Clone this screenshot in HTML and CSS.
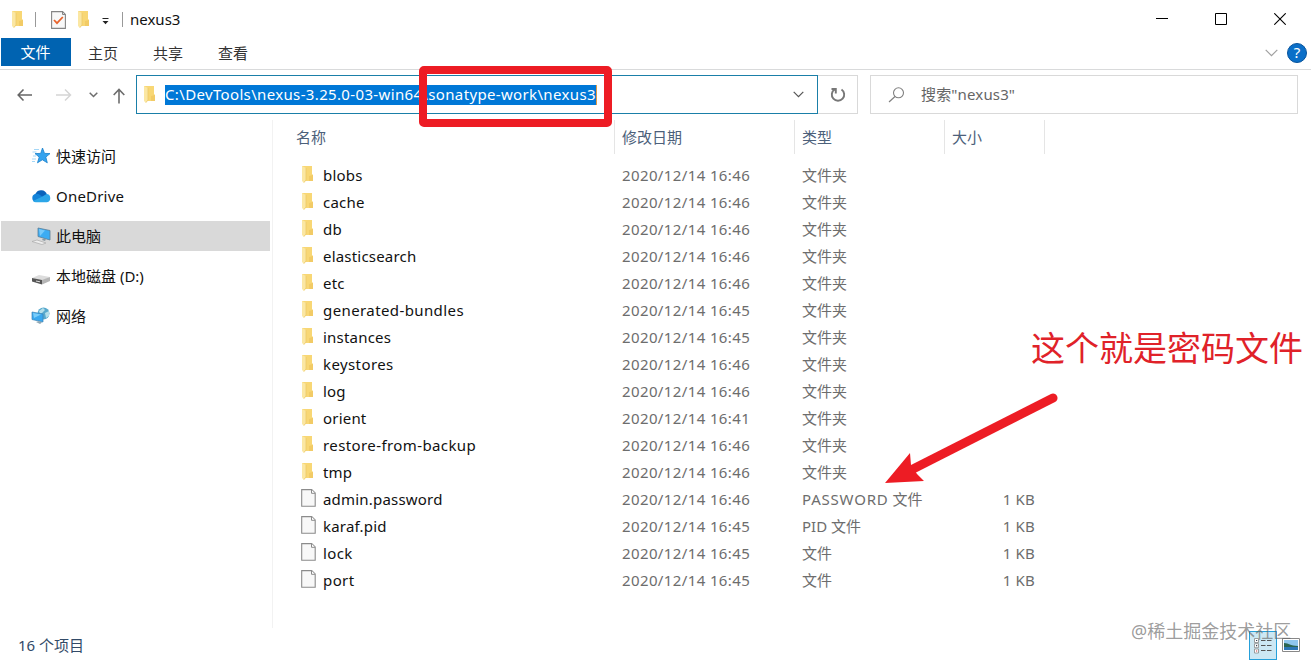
FILE: index.html
```html
<!DOCTYPE html>
<html lang="zh-CN">
<head>
    <meta charset="UTF-8">
    <meta name="viewport" content="width=device-width, initial-scale=1.0">
    <title>nexus3</title>
    <link rel="stylesheet" href="styles.css">
</head>
<body>
    <!-- shared icons -->
    <svg class="defs" width="0" height="0">
        <symbol id="folder" viewBox="0 0 13 17">
            <path d="M1 0h10v8l1 1v6H1z" fill="#f8d775"/>
            <path d="M8 10l4-1v6H8z" fill="#f2cb66"/>
            <path d="M1 0l4 2v12l-2 3-2-2z" fill="#fbe7a3"/>
            <path d="M5 2v12l-2 2.5" fill="none" stroke="#e9c566" stroke-width=".7"/>
        </symbol>
        <symbol id="file" viewBox="0 0 15 18">
            <path d="M.7.6h10l3.5 3.5v13.2H.7z" fill="#f8f8f8" stroke="#8b8b8b" stroke-width="1.1"/>
            <path d="M10.5.8v3.5H14" fill="#fff" stroke="#8b8b8b"/>
        </symbol>
    </svg>

    <div class="window">
        <div class="titlebar">
            <svg class="folder"><use href="#folder"/></svg>
            <span class="sep"></span>
            <svg class="check" width="15" height="18" viewBox="0 0 15 18">
                <path d="M.6.6h11l2.8 2.8v14H.6z" fill="#f8f8f8" stroke="#858585" stroke-width="1.1"/>
                <path d="M11.5.8v2.7h2.7" fill="none" stroke="#858585"/>
                <path d="M3 9l3 3.2L11.8 6" fill="none" stroke="#e8632c" stroke-width="1.8"/>
            </svg>
            <svg class="folder"><use href="#folder"/></svg>
            <svg class="more" width="8" height="7" viewBox="0 0 8 7"><path d="M.5.5h6" stroke="#222"/><path d="M.5 3h6l-3 3.200z" fill="#222"/></svg>
            <span class="sep dark"></span>
            <span class="name">nexus3</span>
            <div class="window-buttons">
                <svg width="12" height="12"><path d="M0 5.5h12" stroke="#000"/></svg>
                <svg width="12" height="12"><path d="M.5.5h11v11H.5z" fill="none" stroke="#000"/></svg>
                <svg width="12" height="12"><path d="M.3.3l11.4 11.4M11.7.3L.3 11.7" stroke="#000" stroke-width="1.1"/></svg>
            </div>
        </div>

        <div class="ribbon">
            <span class="tab active">文件</span>
            <span class="tab">主页</span>
            <span class="tab">共享</span>
            <span class="tab">查看</span>
            <div class="ribbon-right">
                <svg width="13" height="8" viewBox="0 0 13 8"><path d="M.7.8l5.8 5.8L12.300.8" fill="none" stroke="#a0a0a0" stroke-width="1.2"/></svg>
                <span class="help">?</span>
            </div>
        </div>

        <div class="navbar">
            <div class="arrows">
                <svg width="16" height="14" viewBox="0 0 16 14"><path d="M15 7H1.500M6.500 1.500L1.200 7l5.300 5.500" fill="none" stroke="#666" stroke-width="1.6"/></svg>
                <svg width="16" height="14" viewBox="0 0 16 14"><path d="M0 7h14M9 1.500L14.500 7 9 12.500" fill="none" stroke="#d5d5d5" stroke-width="1.5"/></svg>
                <svg width="9" height="6" viewBox="0 0 9 6"><path d="M.7.7l3.800 3.800L8.300.7" fill="none" stroke="#6d6d6d" stroke-width="1.5"/></svg>
                <svg width="12" height="16" viewBox="0 0 12 16"><path d="M6 15.500V1.500M.7 7L6 1.500 11.300 7" fill="none" stroke="#6d6d6d" stroke-width="1.6"/></svg>
            </div>
            <div class="address">
                <svg class="folder"><use href="#folder"/></svg>
                <span class="path">C:\DevTools\nexus-3.25.0-03-win64\sonatype-work\nexus3</span>
                <svg class="drop" width="11" height="7" viewBox="0 0 11 7"><path d="M.7.8l4.800 4.800L10.300.8" fill="none" stroke="#555" stroke-width="1.2"/></svg>
            </div>
            <div class="refresh">
                <svg width="16" height="16" viewBox="0 0 16 16"><path d="M11.500 2.500A6.200 6.200 0 1 1 4.500 2.500M1.500 2h4.300v4.500" fill="none" stroke="#777" stroke-width="1.9"/></svg>
            </div>
            <div class="search">
                <svg width="17" height="16" viewBox="0 0 17 16"><circle cx="10.500" cy="5.800" r="5" fill="none" stroke="#808080" stroke-width="1.1"/><path d="M7 9.500L1 15" stroke="#808080" stroke-width="1.200"/></svg>
                <span>搜索"nexus3"</span>
            </div>
            <div class="highlight"></div>
        </div>

        <div class="main">
            <div class="sidebar">
                <div class="place">
                    <svg width="20" height="18" viewBox="0 0 20 18">
                        <path d="M11.500 1l2 5.400 5.500.2-4.200 3.500 1.500 5.700-4.900-3-4.900 3 1.700-5.700L4 6.600l5.700-.2z" fill="#36a3ee" stroke="#1680cb" stroke-width=".8"/>
                        <path d="M3 2.500h5M1.500 5h4M2 9h3M1 12h4M1 14.500h3" stroke="#8dcdf5" stroke-width=".8"/>
                    </svg>
                    <span>快速访问</span>
                </div>
                <div class="place">
                    <svg width="20" height="18" viewBox="0 0 20 18">
                        <path d="M5 15a5 5 0 0 1-.5-8.300A6.300 6.300 0 0 1 16 7.500L12 13z" fill="#0a63bb"/>
                        <path d="M4 7a5 5 0 0 1 5 1l6 4-6 3H4.500A4.200 4.200 0 0 1 4 7z" fill="#1383d9"/>
                        <path d="M2 14l9-4.300 4.500-2.600A4.100 4.100 0 0 1 16 15.200H5A4 4 0 0 1 2 14z" fill="#2ca6e8"/>
                    </svg>
                    <span class="latin">OneDrive</span>
                </div>
                <div class="place selected">
                    <svg width="20" height="18" viewBox="0 0 20 18">
                        <path d="M7 1l12 2.500v9.500L7 9.500z" fill="#3cacf3" stroke="#5b7f98" stroke-width=".8"/>
                        <path d="M8 2l6 1.500L9 9z" fill="#77cafb"/>
                        <path d="M12 11.500l3 .8-1 1.700-3-1z" fill="#8d9aa2"/>
                        <path d="M1 14.500l5-1.500 9 3-4 1.500z" fill="#eee" stroke="#aaa" stroke-width=".7"/>
                    </svg>
                    <span>此电脑</span>
                </div>
                <div class="place">
                    <svg width="20" height="18" viewBox="0 0 20 18">
                        <path d="M1 11l7-3 11 2-8 4z" fill="#ddd"/>
                        <path d="M1 11l10 2v4.500L1 14.500z" fill="#555"/>
                        <path d="M11 13l8-3v4l-8 3.500z" fill="#b5b5b5"/>
                        <path d="M5 14l4 .8" stroke="#ddd"/>
                    </svg>
                    <span>本地磁盘 (D:)</span>
                </div>
                <div class="place">
                    <svg width="20" height="18" viewBox="0 0 20 18">
                        <circle cx="12.500" cy="6.500" r="6" fill="#58a9cd"/>
                        <path d="M8 4l4-3 2 2-3 3-2 1zM14 6l4-2v5l-3 2z" fill="#b5dfea"/>
                        <path d="M1 5l11 2v8L1 12.500z" fill="#39a8ef" stroke="#3a83b5" stroke-width=".7"/>
                        <path d="M2 6l8 1.500L3 11z" fill="#79cdfa"/>
                        <path d="M5 15l3-1 3 1.500-2 1.500z" fill="#91a8b4"/>
                    </svg>
                    <span>网络</span>
                </div>
            </div>

            <div class="files">
                <div class="row head"><span>名称</span><span>修改日期</span><span>类型</span><span>大小</span></div>
                <div class="list">
                    <div class="row"><span class="fname"><svg class="folder"><use href="#folder"/></svg>blobs</span><span class="date">2020/12/14 16:46</span><span>文件夹</span><span></span></div>
                    <div class="row"><span class="fname"><svg class="folder"><use href="#folder"/></svg>cache</span><span class="date">2020/12/14 16:46</span><span>文件夹</span><span></span></div>
                    <div class="row"><span class="fname"><svg class="folder"><use href="#folder"/></svg>db</span><span class="date">2020/12/14 16:46</span><span>文件夹</span><span></span></div>
                    <div class="row"><span class="fname"><svg class="folder"><use href="#folder"/></svg>elasticsearch</span><span class="date">2020/12/14 16:46</span><span>文件夹</span><span></span></div>
                    <div class="row"><span class="fname"><svg class="folder"><use href="#folder"/></svg>etc</span><span class="date">2020/12/14 16:46</span><span>文件夹</span><span></span></div>
                    <div class="row"><span class="fname wide"><svg class="folder"><use href="#folder"/></svg>generated-bundles</span><span class="date">2020/12/14 16:45</span><span>文件夹</span><span></span></div>
                    <div class="row"><span class="fname"><svg class="folder"><use href="#folder"/></svg>instances</span><span class="date">2020/12/14 16:45</span><span>文件夹</span><span></span></div>
                    <div class="row"><span class="fname wide"><svg class="folder"><use href="#folder"/></svg>keystores</span><span class="date">2020/12/14 16:46</span><span>文件夹</span><span></span></div>
                    <div class="row"><span class="fname"><svg class="folder"><use href="#folder"/></svg>log</span><span class="date">2020/12/14 16:46</span><span>文件夹</span><span></span></div>
                    <div class="row"><span class="fname"><svg class="folder"><use href="#folder"/></svg>orient</span><span class="date">2020/12/14 16:41</span><span>文件夹</span><span></span></div>
                    <div class="row"><span class="fname wide"><svg class="folder"><use href="#folder"/></svg>restore-from-backup</span><span class="date">2020/12/14 16:46</span><span>文件夹</span><span></span></div>
                    <div class="row"><span class="fname"><svg class="folder"><use href="#folder"/></svg>tmp</span><span class="date">2020/12/14 16:46</span><span>文件夹</span><span></span></div>
                    <div class="row"><span class="fname"><svg class="file"><use href="#file"/></svg>admin.password</span><span class="date">2020/12/14 16:46</span><span><span class="caps">PASSWORD</span> 文件</span><span class="size">1 KB</span></div>
                    <div class="row"><span class="fname"><svg class="file"><use href="#file"/></svg>karaf.pid</span><span class="date">2020/12/14 16:45</span><span>PID 文件</span><span class="size">1 KB</span></div>
                    <div class="row"><span class="fname wide"><svg class="file"><use href="#file"/></svg>lock</span><span class="date">2020/12/14 16:45</span><span>文件</span><span class="size">1 KB</span></div>
                    <div class="row"><span class="fname wide"><svg class="file"><use href="#file"/></svg>port</span><span class="date">2020/12/14 16:45</span><span>文件</span><span class="size">1 KB</span></div>
                </div>
            </div>
        </div>

        <div class="statusbar">
            <span class="count">16 个项目</span>
            <div class="views">
                <div class="details">
                    <svg width="18" height="16" viewBox="0 0 18 16">
                        <path d="M.5.5h4v4h-4zM.5 5.700h4v4h-4zM.5 11h4v4h-4z" fill="#fff" stroke="#888" stroke-width=".8"/>
                        <path d="M2 2.500h1.200M2 7.700h1.200" stroke="#345" stroke-width="1.2"/>
                        <path d="M2 13h1.200" stroke="#c33" stroke-width="1.2"/>
                        <path d="M7 2.500h4.500M13 2.500h4.500M7 7.500h4.500M13 7.500h4.500M7 12.500h4.500M13 12.500h4.500" stroke="#555"/>
                    </svg>
                </div>
                <svg class="thumb" width="18" height="14" viewBox="0 0 18 14">
                    <path d="M.5.5h17v13H.5z" fill="#fff" stroke="#888"/>
                    <path d="M2 2h14v10H2z" fill="#8fc6ee"/>
                    <path d="M2 5c5 0 6 3 14 3v1H2z" fill="#2b6552"/>
                    <path d="M2 9h14v3H2z" fill="#2c76b6"/>
                </svg>
            </div>
        </div>

        <div class="note">这个就是密码文件</div>
        <svg class="arrow" width="180" height="96" viewBox="0 0 180 96">
            <path d="M172 7L32 78" stroke="#ed1c24" stroke-width="9" stroke-linecap="round"/>
            <path d="M4 92L29 62l1 12 6 9 7 7z" fill="#ed1c24"/>
        </svg>
        <div class="watermark">@稀土掘金技术社区</div>
    </div>
</body>
</html>
```

FILE: styles.css
```css
* {
    box-sizing: border-box;
}

body {
    margin: 0;
    background: #fff;
    font-family: "Noto Sans", "Noto Sans CJK SC", sans-serif;
    font-size: 15px;
    line-height: 20px;
    color: #111;
}

svg {
    display: block;
    flex-shrink: 0;
}

.defs {
    position: absolute;
}

.window {
    position: relative;
    display: flex;
    flex-direction: column;
    width: 1311px;
    height: 661px;
    overflow: hidden;
}

.folder {
    width: 13px;
    height: 17px;
}

.file {
    width: 15px;
    height: 18px;
}

/* title bar */
.titlebar {
    display: flex;
    align-items: center;
    height: 38px;
    padding: 1px 25px 0 11px;
}

.name {
    padding-bottom: 2px;
}

.sep {
    width: 1px;
    height: 15px;
    margin: 0 15px 0 11px;
    background: #999;
}

.check {
    margin-right: 11px;
}

.more {
    margin: 3px 0 0 12px;
}

.sep.dark {
    margin: 0 7px 0 12px;
}

.window-buttons {
    display: flex;
    gap: 47px;
    margin-left: auto;
    padding-bottom: 2px;
}

/* ribbon */
.ribbon {
    display: flex;
    height: 32px;
    padding-left: 1px;
    border-bottom: 1px solid #d9dadb;
}

.tab {
    width: 65px;
    padding: 5px 1px 0 0;
    text-align: center;
    color: #333;
}

.tab.active {
    width: 70px;
    height: 28px;
    padding-top: 4px;
    background: #0063b1;
    color: #fff;
}

.ribbon-right {
    display: flex;
    align-items: center;
    gap: 9px;
    margin: -1px 4px 0 auto;
}

.help {
    width: 20px;
    height: 20px;
    border: 1px solid #07539c;
    border-radius: 50%;
    background: #0b6fc8;
    color: #fff;
    line-height: 17px;
    text-align: center;
}

/* navigation */
.navbar {
    position: relative;
    display: flex;
    height: 50px;
    padding: 5px 13px 6px 17px;
}

.arrows {
    display: flex;
    align-items: center;
    width: 119px;
}

.arrows svg:nth-child(2) {
    margin-left: 23px;
}

.arrows svg:nth-child(3) {
    margin-left: 17px;
}

.arrows svg:nth-child(4) {
    margin-left: 15px;
    margin-top: 2px;
}

.address {
    display: flex;
    align-items: center;
    width: 682px;
    padding: 0 13px 0 6px;
    border: 1px solid #1a7fa8;
}

.path {
    height: 20px;
    margin-left: 9px;
    border-right: 1px solid #e09a45;
    background: #0078d7;
    color: #fff;
    letter-spacing: 0.35px;
    line-height: 19px;
    white-space: nowrap;
}

.drop {
    margin-left: auto;
}

.refresh {
    display: flex;
    align-items: center;
    justify-content: center;
    width: 40px;
    border: 1px solid #d9d9d9;
    border-left: 0;
}

.search {
    display: flex;
    align-items: center;
    gap: 16px;
    flex: 1;
    margin-left: 12px;
    padding-left: 17px;
    border: 1px solid #d9d9d9;
    color: #666;
}

.search span {
    padding-bottom: 2px;
    letter-spacing: 0.15px;
}

/* red frame over the address */
.highlight {
    position: absolute;
    left: 419px;
    top: -4px;
    width: 193px;
    height: 61px;
    border: 8px solid #ed1c24;
    border-radius: 5px;
}

/* content */
.main {
    display: flex;
    height: 508px;
}

.sidebar {
    display: flex;
    flex-direction: column;
    gap: 10px;
    width: 273px;
    padding: 21px 2px 0 1px;
    border-right: 1px solid #f2f2f2;
}

.place {
    display: flex;
    align-items: center;
    gap: 5px;
    height: 30px;
    padding-left: 30px;
}

.place.selected {
    background: #d9d9d9;
}

.latin {
    letter-spacing: 0.2px;
}

.files {
    flex: 1;
    padding-left: 23px;
}

.row {
    display: grid;
    grid-template-columns: 319px 180px 150px 100px;
    align-items: center;
    height: 27px;
    color: #6d6d6d;
}

.row > span {
    padding-left: 7px;
    white-space: nowrap;
}

.row > span:first-child {
    padding-left: 0;
}

.row.head {
    height: 34px;
    color: #4c607a;
}

.row.head span {
    height: 34px;
    border-right: 1px solid #e5e5e5;
    line-height: 35px;
}

.list {
    padding-top: 7px;
}

.row .fname {
    display: flex;
    align-items: center;
    color: #111;
    letter-spacing: 0.2px;
}

.row .fname.wide {
    letter-spacing: 0.4px;
}

.row > .fname:first-child {
    padding-left: 5px;
}

.fname .folder {
    margin-right: 9px;
}

.fname .file {
    margin: -1px 7px 0 0;
}

.date {
    letter-spacing: 0.38px;
}

.caps {
    letter-spacing: 0.8px;
}

.size {
    padding-right: 10px;
    letter-spacing: 0.2px;
    text-align: right;
}

/* status bar */
.statusbar {
    display: flex;
    align-items: center;
    justify-content: space-between;
    height: 33px;
    padding: 2px 11px 0 18px;
    color: #324a68;
}

.count {
    padding-bottom: 2px;
}

.views {
    display: flex;
    align-items: center;
    gap: 5px;
}

.details {
    display: flex;
    align-items: center;
    justify-content: center;
    width: 28px;
    height: 29px;
    border: 1px solid #26a0da;
    background: #cce8f4;
}

.thumb {
    margin-bottom: 2px;
}

/* annotations */
.note {
    position: absolute;
    left: 1031px;
    top: 323px;
    color: #e02229;
    font-family: "Noto Sans CJK SC", sans-serif;
    font-size: 34px;
    line-height: 48px;
    white-space: nowrap;
}

.arrow {
    position: absolute;
    left: 881px;
    top: 391px;
}

.watermark {
    position: absolute;
    left: 1131px;
    top: 619px;
    color: rgba(100, 100, 100, 0.65);
    font-size: 18px;
    line-height: 24px;
    white-space: nowrap;
}
```
